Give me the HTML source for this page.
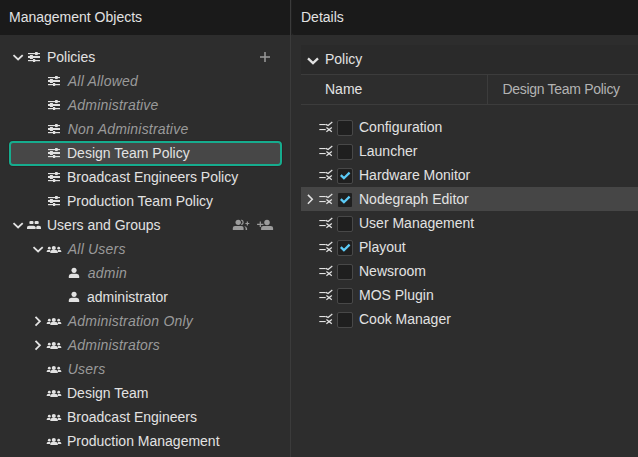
<!DOCTYPE html>
<html><head><meta charset="utf-8">
<style>
*{box-sizing:border-box;margin:0;padding:0}
html,body{width:638px;height:457px;overflow:hidden;background:#2d2d2d;font-family:"Liberation Sans",sans-serif;font-size:14px;color:#e2e2e2}
.abs{position:absolute}
.hdr{position:absolute;top:0;height:35px;background:#1a1a1a;line-height:35px;color:#e2e2e2;white-space:nowrap}
.t{position:absolute;height:24px;line-height:24px;white-space:nowrap}
.it{font-style:italic;color:#9a9a9a;letter-spacing:0.2px}
svg{position:absolute;overflow:visible}
.line{position:absolute;height:1px;background:#3c3c3c}
.cb{position:absolute;width:16px;height:16px;border:1px solid #484848;border-radius:2px;background:#1f1f1f;background-clip:padding-box}
</style></head><body>

<div class="hdr" style="left:0;width:290px;padding-left:9px">Management Objects</div>
<div class="abs" style="left:291px;top:0;width:1px;height:35px;background:#202020"></div>
<div class="hdr" style="left:292px;width:346px;padding-left:9px;border-bottom-left-radius:2px">Details</div>
<div class="abs" style="left:290px;top:0;width:1px;height:457px;background:#3b3b3b"></div>
<div class="abs" style="left:9px;top:141px;width:273px;height:25px;border:2px solid #16ac8e;border-radius:4px;background:#474747;box-shadow:0 0 0 1px #2c2425"></div>
<svg style="left:0;top:0" width="1" height="1"><g fill="#e2e2e2" transform="translate(0 0)"><rect x="28" y="53" width="12" height="1.15"/><rect x="35.1" y="52" width="2.6" height="3.1"/><rect x="28" y="56" width="12" height="2"/><rect x="29.9" y="55" width="3" height="4"/><rect x="28" y="60" width="12" height="1.2"/><rect x="33" y="59" width="2.2" height="3"/></g></svg>
<svg style="left:0;top:0" width="1" height="1"><path fill="none" stroke="#e2e2e2" stroke-width="1.8" d="M13.5 55.2L18.1 59.5L22.7 55.2"/></svg>
<div class="t" style="left:47px;top:45px">Policies</div>
<svg style="left:0;top:0" width="1" height="1"><g fill="#e2e2e2" transform="translate(20 0)"><rect x="28" y="77" width="12" height="1.15"/><rect x="35.1" y="76" width="2.6" height="3.1"/><rect x="28" y="80" width="12" height="2"/><rect x="29.9" y="79" width="3" height="4"/><rect x="28" y="84" width="12" height="1.2"/><rect x="33" y="83" width="2.2" height="3"/></g></svg>
<div class="t it" style="left:67.8px;top:69px">All Allowed</div>
<svg style="left:0;top:0" width="1" height="1"><g fill="#e2e2e2" transform="translate(20 0)"><rect x="28" y="101" width="12" height="1.15"/><rect x="35.1" y="100" width="2.6" height="3.1"/><rect x="28" y="104" width="12" height="2"/><rect x="29.9" y="103" width="3" height="4"/><rect x="28" y="108" width="12" height="1.2"/><rect x="33" y="107" width="2.2" height="3"/></g></svg>
<div class="t it" style="left:67.8px;top:93px">Administrative</div>
<svg style="left:0;top:0" width="1" height="1"><g fill="#e2e2e2" transform="translate(20 0)"><rect x="28" y="125" width="12" height="1.15"/><rect x="35.1" y="124" width="2.6" height="3.1"/><rect x="28" y="128" width="12" height="2"/><rect x="29.9" y="127" width="3" height="4"/><rect x="28" y="132" width="12" height="1.2"/><rect x="33" y="131" width="2.2" height="3"/></g></svg>
<div class="t it" style="left:67.8px;top:117px">Non Administrative</div>
<svg style="left:0;top:0" width="1" height="1"><g fill="#e2e2e2" transform="translate(20 0)"><rect x="28" y="149" width="12" height="1.15"/><rect x="35.1" y="148" width="2.6" height="3.1"/><rect x="28" y="152" width="12" height="2"/><rect x="29.9" y="151" width="3" height="4"/><rect x="28" y="156" width="12" height="1.2"/><rect x="33" y="155" width="2.2" height="3"/></g></svg>
<div class="t" style="left:67px;top:141px">Design Team Policy</div>
<svg style="left:0;top:0" width="1" height="1"><g fill="#e2e2e2" transform="translate(20 0)"><rect x="28" y="173" width="12" height="1.15"/><rect x="35.1" y="172" width="2.6" height="3.1"/><rect x="28" y="176" width="12" height="2"/><rect x="29.9" y="175" width="3" height="4"/><rect x="28" y="180" width="12" height="1.2"/><rect x="33" y="179" width="2.2" height="3"/></g></svg>
<div class="t" style="left:67px;top:165px">Broadcast Engineers Policy</div>
<svg style="left:0;top:0" width="1" height="1"><g fill="#e2e2e2" transform="translate(20 0)"><rect x="28" y="197" width="12" height="1.15"/><rect x="35.1" y="196" width="2.6" height="3.1"/><rect x="28" y="200" width="12" height="2"/><rect x="29.9" y="199" width="3" height="4"/><rect x="28" y="204" width="12" height="1.2"/><rect x="33" y="203" width="2.2" height="3"/></g></svg>
<div class="t" style="left:67px;top:189px">Production Team Policy</div>
<svg style="left:0;top:0" width="1" height="1"><g fill="#e2e2e2"><rect x="29.4" y="220.9" width="4.1" height="3.2" rx="1.2"/><rect x="34.6" y="220.9" width="4.1" height="3.2" rx="1.2"/><path d="M27 229V227.2Q27 225.8 29 225.7H33.5Q35.4 225.8 35.6 227.2V229Z"/><path d="M36.3 229V227.2Q36.3 225.8 37.5 225.7H39Q41 225.8 41 227.2V229Z"/></g></svg>
<svg style="left:0;top:0" width="1" height="1"><path fill="none" stroke="#e2e2e2" stroke-width="1.8" d="M13.5 223.2L18.1 227.5L22.7 223.2"/></svg>
<div class="t" style="left:47px;top:213px">Users and Groups</div>
<svg style="left:0;top:0" width="1" height="1"><g fill="#e2e2e2"><ellipse cx="53.8" cy="247.9" rx="2.05" ry="2"/><path d="M50.3 253V251.6Q50.3 250.2 52 250.1H56Q57.8 250.2 57.8 251.6V253Z"/><ellipse cx="49.3" cy="248.2" rx="1.4" ry="1.4"/><path d="M46.7 252V251.2Q46.8 250.2 48.2 250.1H50.1V252Z"/><ellipse cx="58.7" cy="248.2" rx="1.4" ry="1.4"/><path d="M61.3 252V251.2Q61.2 250.2 59.8 250.1H58V252Z"/></g></svg>
<svg style="left:0;top:0" width="1" height="1"><path fill="none" stroke="#e2e2e2" stroke-width="1.8" d="M33.5 247.2L38.1 251.5L42.7 247.2"/></svg>
<div class="t it" style="left:67.8px;top:237px">All Users</div>
<svg style="left:0;top:0" width="1" height="1"><g fill="#e2e2e2"><circle cx="74.05" cy="270.35" r="2.55"/><path d="M68.8 278V276Q68.9 274 71.5 273.8H76.5Q79.1 274 79.2 276V278Z"/></g></svg>
<div class="t it" style="left:87.8px;top:261px">admin</div>
<svg style="left:0;top:0" width="1" height="1"><g fill="#e2e2e2"><circle cx="74.05" cy="294.35" r="2.55"/><path d="M68.8 302V300Q68.9 298 71.5 297.8H76.5Q79.1 298 79.2 300V302Z"/></g></svg>
<div class="t" style="left:87px;top:285px">administrator</div>
<svg style="left:0;top:0" width="1" height="1"><g fill="#e2e2e2"><ellipse cx="53.8" cy="319.9" rx="2.05" ry="2"/><path d="M50.3 325V323.6Q50.3 322.2 52 322.1H56Q57.8 322.2 57.8 323.6V325Z"/><ellipse cx="49.3" cy="320.2" rx="1.4" ry="1.4"/><path d="M46.7 324V323.2Q46.8 322.2 48.2 322.1H50.1V324Z"/><ellipse cx="58.7" cy="320.2" rx="1.4" ry="1.4"/><path d="M61.3 324V323.2Q61.2 322.2 59.8 322.1H58V324Z"/></g></svg>
<svg style="left:0;top:0" width="1" height="1"><path fill="none" stroke="#e2e2e2" stroke-width="1.8" d="M35.5 316.9L39.9 321.29999999999995L35.5 325.7"/></svg>
<div class="t it" style="left:67.8px;top:309px">Administration Only</div>
<svg style="left:0;top:0" width="1" height="1"><g fill="#e2e2e2"><ellipse cx="53.8" cy="343.9" rx="2.05" ry="2"/><path d="M50.3 349V347.6Q50.3 346.2 52 346.1H56Q57.8 346.2 57.8 347.6V349Z"/><ellipse cx="49.3" cy="344.2" rx="1.4" ry="1.4"/><path d="M46.7 348V347.2Q46.8 346.2 48.2 346.1H50.1V348Z"/><ellipse cx="58.7" cy="344.2" rx="1.4" ry="1.4"/><path d="M61.3 348V347.2Q61.2 346.2 59.8 346.1H58V348Z"/></g></svg>
<svg style="left:0;top:0" width="1" height="1"><path fill="none" stroke="#e2e2e2" stroke-width="1.8" d="M35.5 340.9L39.9 345.29999999999995L35.5 349.7"/></svg>
<div class="t it" style="left:67.8px;top:333px">Administrators</div>
<svg style="left:0;top:0" width="1" height="1"><g fill="#e2e2e2"><ellipse cx="53.8" cy="367.9" rx="2.05" ry="2"/><path d="M50.3 373V371.6Q50.3 370.2 52 370.1H56Q57.8 370.2 57.8 371.6V373Z"/><ellipse cx="49.3" cy="368.2" rx="1.4" ry="1.4"/><path d="M46.7 372V371.2Q46.8 370.2 48.2 370.1H50.1V372Z"/><ellipse cx="58.7" cy="368.2" rx="1.4" ry="1.4"/><path d="M61.3 372V371.2Q61.2 370.2 59.8 370.1H58V372Z"/></g></svg>
<div class="t it" style="left:67.8px;top:357px">Users</div>
<svg style="left:0;top:0" width="1" height="1"><g fill="#e2e2e2"><ellipse cx="53.8" cy="391.9" rx="2.05" ry="2"/><path d="M50.3 397V395.6Q50.3 394.2 52 394.1H56Q57.8 394.2 57.8 395.6V397Z"/><ellipse cx="49.3" cy="392.2" rx="1.4" ry="1.4"/><path d="M46.7 396V395.2Q46.8 394.2 48.2 394.1H50.1V396Z"/><ellipse cx="58.7" cy="392.2" rx="1.4" ry="1.4"/><path d="M61.3 396V395.2Q61.2 394.2 59.8 394.1H58V396Z"/></g></svg>
<div class="t" style="left:67px;top:381px">Design Team</div>
<svg style="left:0;top:0" width="1" height="1"><g fill="#e2e2e2"><ellipse cx="53.8" cy="415.9" rx="2.05" ry="2"/><path d="M50.3 421V419.6Q50.3 418.2 52 418.1H56Q57.8 418.2 57.8 419.6V421Z"/><ellipse cx="49.3" cy="416.2" rx="1.4" ry="1.4"/><path d="M46.7 420V419.2Q46.8 418.2 48.2 418.1H50.1V420Z"/><ellipse cx="58.7" cy="416.2" rx="1.4" ry="1.4"/><path d="M61.3 420V419.2Q61.2 418.2 59.8 418.1H58V420Z"/></g></svg>
<div class="t" style="left:67px;top:405px">Broadcast Engineers</div>
<svg style="left:0;top:0" width="1" height="1"><g fill="#e2e2e2"><ellipse cx="53.8" cy="439.9" rx="2.05" ry="2"/><path d="M50.3 445V443.6Q50.3 442.2 52 442.1H56Q57.8 442.2 57.8 443.6V445Z"/><ellipse cx="49.3" cy="440.2" rx="1.4" ry="1.4"/><path d="M46.7 444V443.2Q46.8 442.2 48.2 442.1H50.1V444Z"/><ellipse cx="58.7" cy="440.2" rx="1.4" ry="1.4"/><path d="M61.3 444V443.2Q61.2 442.2 59.8 442.1H58V444Z"/></g></svg>
<div class="t" style="left:67px;top:429px">Production Management</div>
<svg style="left:0;top:0" width="1" height="1"><path fill="#9a9a9a" d="M260 56.25H270V57.75H260ZM264.25 52H265.75V62H264.25Z"/></svg>
<svg style="left:0;top:0" width="1" height="1"><g fill="#9c9c9c"><circle cx="238.2" cy="222.3" r="2.65"/><path d="M232.8 230V228Q232.8 226 235 225.9H241.4Q243.6 226 243.6 228V230Z"/><path d="M244.2 226.1Q247 226.8 247.1 228.6V230H245.6V228.6Q245.5 227.2 244.2 226.1Z"/></g><path fill="none" stroke="#9c9c9c" stroke-width="1.2" d="M241.3 220.1A2.3 2.3 0 0 1 241.3 224.6M245.4 223.5H249.3M247.35 221.6V225.5"/></svg>
<svg style="left:0;top:0" width="1" height="1"><g fill="#9c9c9c"><circle cx="267" cy="222.4" r="2.75"/><path d="M261.1 230V228Q261.2 226.1 263.5 226H270.7Q273 226.1 273.1 228V230Z"/></g><path fill="none" stroke="#9c9c9c" stroke-width="1.2" d="M257.1 224.4H263.4M260.3 221.6V226.9"/></svg>
<div class="abs" style="left:301px;top:45px;width:337px;height:29px;background:#2a2a2a"></div>
<div class="line" style="left:301px;top:74px;width:337px"></div>
<div class="line" style="left:301px;top:104px;width:337px"></div>
<div class="abs" style="left:487px;top:75px;width:1px;height:29px;background:#3c3c3c"></div>
<svg style="left:0;top:0" width="1" height="1"><path fill="none" stroke="#e2e2e2" stroke-width="2.3" d="M308 58.3L313 63.1L318 58.3"/></svg>
<div class="abs" style="left:325px;top:45px;height:29px;line-height:29px">Policy</div>
<div class="abs" style="left:325px;top:75px;height:29px;line-height:29px">Name</div>
<div class="abs" style="left:502.5px;top:75px;height:29px;line-height:29px;letter-spacing:-0.3px;color:#b3b3b3">Design Team Policy</div>
<div class="abs" style="left:301px;top:187px;width:337px;height:24px;background:#464646"></div>
<svg style="left:0;top:0" width="1" height="1"><g fill="#e2e2e2"><rect x="319.3" y="124" width="6.4" height="1.1"/><rect x="319.3" y="129" width="6.4" height="1.1"/></g><path fill="none" stroke="#e2e2e2" stroke-width="1.25" d="M325.8 124.4L328.1 125.6L332.3 122.1M326.4 127.4L331.8 131.7M331.8 127.4L326.4 131.7"/></svg>
<div class="cb" style="left:337px;top:120px;border-color:#484848"></div>
<div class="t" style="left:359px;top:115px">Configuration</div>
<svg style="left:0;top:0" width="1" height="1"><g fill="#e2e2e2"><rect x="319.3" y="148" width="6.4" height="1.1"/><rect x="319.3" y="153" width="6.4" height="1.1"/></g><path fill="none" stroke="#e2e2e2" stroke-width="1.25" d="M325.8 148.4L328.1 149.6L332.3 146.1M326.4 151.4L331.8 155.7M331.8 151.4L326.4 155.7"/></svg>
<div class="cb" style="left:337px;top:144px;border-color:#484848"></div>
<div class="t" style="left:359px;top:139px">Launcher</div>
<svg style="left:0;top:0" width="1" height="1"><g fill="#e2e2e2"><rect x="319.3" y="172" width="6.4" height="1.1"/><rect x="319.3" y="177" width="6.4" height="1.1"/></g><path fill="none" stroke="#e2e2e2" stroke-width="1.25" d="M325.8 172.4L328.1 173.6L332.3 170.1M326.4 175.4L331.8 179.7M331.8 175.4L326.4 179.7"/></svg>
<div class="cb" style="left:337px;top:168px;border-color:#484848"></div>
<svg style="left:0;top:0" width="1" height="1"><path fill="none" stroke="#5ccbf7" stroke-width="2.3" d="M340.8 175.2L343.9 178.2L349.6 172.6"/></svg>
<div class="t" style="left:359px;top:163px">Hardware Monitor</div>
<svg style="left:0;top:0" width="1" height="1"><g fill="#e2e2e2"><rect x="319.3" y="196" width="6.4" height="1.1"/><rect x="319.3" y="201" width="6.4" height="1.1"/></g><path fill="none" stroke="#e2e2e2" stroke-width="1.25" d="M325.8 196.4L328.1 197.6L332.3 194.1M326.4 199.4L331.8 203.7M331.8 199.4L326.4 203.7"/></svg>
<div class="cb" style="left:337px;top:192px;border-color:transparent"></div>
<svg style="left:0;top:0" width="1" height="1"><path fill="none" stroke="#5ccbf7" stroke-width="2.3" d="M340.8 199.2L343.9 202.2L349.6 196.6"/></svg>
<div class="t" style="left:359px;top:187px">Nodegraph Editor</div>
<svg style="left:0;top:0" width="1" height="1"><g fill="#e2e2e2"><rect x="319.3" y="220" width="6.4" height="1.1"/><rect x="319.3" y="225" width="6.4" height="1.1"/></g><path fill="none" stroke="#e2e2e2" stroke-width="1.25" d="M325.8 220.4L328.1 221.6L332.3 218.1M326.4 223.4L331.8 227.7M331.8 223.4L326.4 227.7"/></svg>
<div class="cb" style="left:337px;top:216px;border-color:#484848"></div>
<div class="t" style="left:359px;top:211px">User Management</div>
<svg style="left:0;top:0" width="1" height="1"><g fill="#e2e2e2"><rect x="319.3" y="244" width="6.4" height="1.1"/><rect x="319.3" y="249" width="6.4" height="1.1"/></g><path fill="none" stroke="#e2e2e2" stroke-width="1.25" d="M325.8 244.4L328.1 245.6L332.3 242.1M326.4 247.4L331.8 251.7M331.8 247.4L326.4 251.7"/></svg>
<div class="cb" style="left:337px;top:240px;border-color:#484848"></div>
<svg style="left:0;top:0" width="1" height="1"><path fill="none" stroke="#5ccbf7" stroke-width="2.3" d="M340.8 247.2L343.9 250.2L349.6 244.6"/></svg>
<div class="t" style="left:359px;top:235px">Playout</div>
<svg style="left:0;top:0" width="1" height="1"><g fill="#e2e2e2"><rect x="319.3" y="268" width="6.4" height="1.1"/><rect x="319.3" y="273" width="6.4" height="1.1"/></g><path fill="none" stroke="#e2e2e2" stroke-width="1.25" d="M325.8 268.4L328.1 269.6L332.3 266.1M326.4 271.4L331.8 275.7M331.8 271.4L326.4 275.7"/></svg>
<div class="cb" style="left:337px;top:264px;border-color:#484848"></div>
<div class="t" style="left:359px;top:259px">Newsroom</div>
<svg style="left:0;top:0" width="1" height="1"><g fill="#e2e2e2"><rect x="319.3" y="292" width="6.4" height="1.1"/><rect x="319.3" y="297" width="6.4" height="1.1"/></g><path fill="none" stroke="#e2e2e2" stroke-width="1.25" d="M325.8 292.4L328.1 293.6L332.3 290.1M326.4 295.4L331.8 299.7M331.8 295.4L326.4 299.7"/></svg>
<div class="cb" style="left:337px;top:288px;border-color:#484848"></div>
<div class="t" style="left:359px;top:283px">MOS Plugin</div>
<svg style="left:0;top:0" width="1" height="1"><g fill="#e2e2e2"><rect x="319.3" y="316" width="6.4" height="1.1"/><rect x="319.3" y="321" width="6.4" height="1.1"/></g><path fill="none" stroke="#e2e2e2" stroke-width="1.25" d="M325.8 316.4L328.1 317.6L332.3 314.1M326.4 319.4L331.8 323.7M331.8 319.4L326.4 323.7"/></svg>
<div class="cb" style="left:337px;top:312px;border-color:#484848"></div>
<div class="t" style="left:359px;top:307px">Cook Manager</div>
<svg style="left:0;top:0" width="1" height="1"><path fill="none" stroke="#e2e2e2" stroke-width="1.5" d="M307.9 194.9L312.29999999999995 199.3L307.9 203.70000000000002"/></svg>
</body></html>
